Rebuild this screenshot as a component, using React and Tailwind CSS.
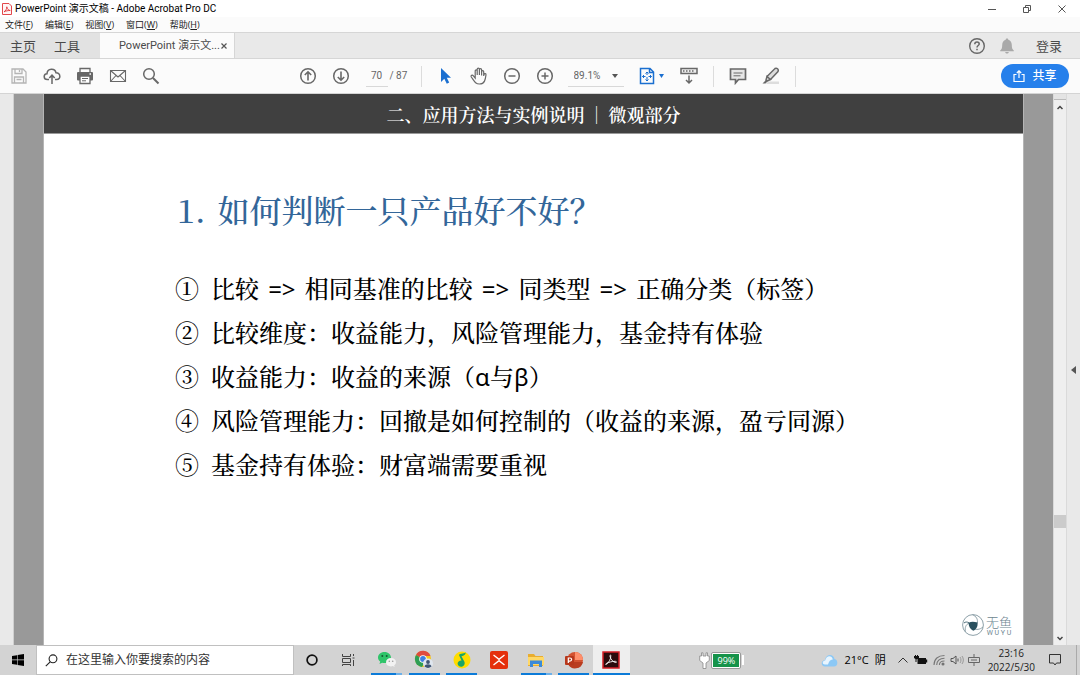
import { Fragment, useState } from 'react';
import clsx from 'clsx';

const menus = [
  { label: '文件', key: 'F' },
  { label: '编辑', key: 'E' },
  { label: '视图', key: 'V' },
  { label: '窗口', key: 'W' },
  { label: '帮助', key: 'H' },
];

const points = [
  { n: '①', text: '比较 => 相同基准的比较 => 同类型 => 正确分类（标签）' },
  { n: '②', text: '比较维度：收益能力，风险管理能力，基金持有体验' },
  { n: '③', text: '收益能力：收益的来源（α与β）' },
  { n: '④', text: '风险管理能力：回撤是如何控制的（收益的来源，盈亏同源）' },
  { n: '⑤', text: '基金持有体验：财富端需要重视' },
];

const apps = [
  { name: '微信', Icon: WeChatIcon, more: true },
  { name: 'Chrome', Icon: ChromeIcon, open: true },
  { name: 'QQ音乐', Icon: MusicIcon, open: true },
  { name: 'XMind', Icon: XIcon },
  { name: '文件资源管理器', Icon: FolderIcon, more: true },
  { name: 'PowerPoint', Icon: PowerPointIcon, open: true },
  { name: 'Acrobat', Icon: AcrobatIcon, open: true, active: true },
];

function WeChatIcon() {
  return (
    <svg width="20" height="18" viewBox="0 0 20 18">
      <path d="M7.500 1C3.500 1 1 3.600 1 6.500c0 1.700.8 3 2.200 4L2.500 13l2.700-1.300c.7.2 1.500.3 2.300.3 3.800 0 6.500-2.500 6.500-5.500S11.300 1 7.500 1z" fill="#2fc46a" />
      <circle cx="5.300" cy="5" r="1" fill="#145c33" />
      <circle cx="9.700" cy="5" r="1" fill="#145c33" />
      <path d="M14 7c-3 0-5 1.900-5 4.200s2 4.200 5 4.200c.6 0 1.200-.1 1.700-.3l2 1-.5-1.800c1.100-.8 1.800-1.900 1.800-3.100C19 8.900 17 7 14 7z" fill="#f2f2f2" />
      <circle cx="12.300" cy="10.300" r=".8" fill="#999" />
      <circle cx="15.700" cy="10.300" r=".8" fill="#999" />
    </svg>
  );
}

function ChromeIcon() {
  return (
    <svg width="20" height="20" viewBox="0 0 20 20">
      <circle cx="9" cy="9" r="8" fill="#f5c518" />
      <path d="M9 9L2 5a8 8 0 0 1 14.500 1H9z" fill="#df4b3e" />
      <path d="M9 9L2 5a8 8 0 0 0 6 12l3-5z" fill="#2f9e55" />
      <circle cx="9" cy="9" r="3.800" fill="#fff" />
      <circle cx="9" cy="9" r="2.900" fill="#3f7fe0" />
      <circle cx="14" cy="13.500" r="5" fill="#dfe6ee" />
      <circle cx="14" cy="12" r="1.900" fill="#405574" />
      <path d="M10.500 16.500c.5-3 6.500-3 7 0a5 5 0 0 1-7 0z" fill="#405574" />
    </svg>
  );
}

function MusicIcon() {
  return (
    <svg width="18" height="18" viewBox="0 0 18 18">
      <circle cx="9" cy="9" r="8.500" fill="#ffdc00" />
      <path d="M12.800 1.600c-.3 2.300-1.800 3.200-4.300 3.600l2.800 5.300c1.200 2.700-.6 5.300-3.200 5.300-2 0-3.500-1.300-3.500-3.200 0-2 1.700-3.300 3.900-3.200L6.200 4.600c-.3-1.300.6-1.700 2-1.800 2-.1 3.300-.4 4.600-1.200z" fill="#19a566" />
    </svg>
  );
}

function XIcon() {
  return (
    <svg width="18" height="18" viewBox="0 0 18 18">
      <rect width="18" height="18" rx="2" fill="#e5300c" />
      <path d="M3.500 4L9 8.300 14.500 4M3.500 14L9 9.700l5.500 4.300" stroke="#fff" strokeWidth="1.300" fill="none" />
    </svg>
  );
}

function FolderIcon() {
  return (
    <svg width="18" height="16" viewBox="0 0 18 16">
      <path d="M1 2h6l1.500 2H16v10H1z" fill="#e9ad2f" />
      <path d="M1 5h16v8H1z" fill="#ffd866" />
      <path d="M3 8.500h12V15h-3v-3H6v3H3z" fill="#3b8ad8" />
    </svg>
  );
}

function PowerPointIcon() {
  return (
    <svg width="20" height="18" viewBox="0 0 20 18">
      <circle cx="11" cy="9" r="8" fill="#d35230" />
      <path d="M11 1a8 8 0 0 1 8 8h-8z" fill="#ff8f6b" />
      <path d="M4 11h15a8 8 0 0 1-15 2z" fill="#b93c1f" />
      <rect x="1" y="5" width="9" height="9" rx="1" fill="#b7371b" />
      <path d="M4.300 12V7h1.600c2.300 0 2.300 3.100 0 3.100H4.300" stroke="#fff" strokeWidth="1.200" fill="none" />
    </svg>
  );
}

function AcrobatIcon() {
  return (
    <svg width="18" height="18" viewBox="0 0 18 18">
      <rect x="1" y="1" width="16" height="16" fill="#2b0a0c" stroke="#d61e26" strokeWidth="1.500" />
      <path d="M4 13.500c2.500-1.500 5.200-5.500 4.800-9C8.600 3.700 7.600 4 8 5.500c.7 3 3.200 5.700 5.600 6 1.400.1 1.200-1.200-.6-1.200-3 0-6.400 1-8.600 2.200-.8.5-.9 1-.4 1z" stroke="#fff" strokeWidth=".9" fill="none" />
    </svg>
  );
}

function PdfIcon() {
  return (
    <svg width="10" height="12" viewBox="0 0 10 12" fill="none">
      <path d="M.5.500h6.500l2.500 2.500v8.500h-9z" fill="#fff5f5" stroke="#e2474b" />
      <path d="M2 8.800c1.500-.8 3-3 2.800-5 .3 2.200 1.700 3.600 3.400 3.700-2-.1-4.200.4-6.200 1.300z" stroke="#dc2f34" strokeWidth=".9" />
    </svg>
  );
}

function LogoMark() {
  return (
    <svg width="22" height="24" viewBox="0 0 22 24" fill="none" stroke="#8ea1a9" strokeWidth="1">
      <circle cx="11" cy="12" r="10.400" />
      <path d="M10.500 1.800c4 1.500 5.500 4.500 4.800 8.500M21 14c-3.300 2.700-6.500 3-9.800 1.500M3.500 18.800C2.500 14.500 4 11.500 7 10" />
      <path d="M6.500 9.800c3-1.500 5.500-1.200 9-.3.500 3.700-1 7-4.300 8.300-3.200-1.800-4.500-4.500-4.700-8z" fill="#29505e" stroke="none" />
      <path d="M2 10c1.500-1.300 3-1.200 5-.2" stroke="#4d6c78" />
    </svg>
  );
}

function Line({ children, size = 18 }) {
  return (
    <svg width={size} height={size} viewBox="0 0 18 18" fill="none" stroke="currentColor" strokeWidth="1.300">
      {children}
    </svg>
  );
}

function Tool({ label, children, className = 'text-[#686868]' }) {
  return (
    <button aria-label={label} className={clsx('flex h-8 w-[33px] shrink-0 items-center justify-center', className)}>
      {children}
    </button>
  );
}

function Separator({ className }) {
  return <div className={clsx('h-[21px] w-px shrink-0 bg-[#dcdcdc]', className)} />;
}

function TitleBar() {
  return (
    <div className="flex h-[17px] items-center bg-white pl-0.5 text-black">
      <PdfIcon />
      <h1 className="ml-[3px] font-[Roboto,'Noto_Sans_CJK_SC',sans-serif] text-[10px]/4 whitespace-nowrap">PowerPoint 演示文稿 - Adobe Acrobat Pro DC</h1>
      <div className="ml-auto flex text-[#555]">
        <button aria-label="最小化" className="flex w-[35px] justify-center">
          <svg width="10" height="10" stroke="currentColor"><path d="M1 5.500h8" /></svg>
        </button>
        <button aria-label="还原" className="flex w-[35px] justify-center">
          <svg width="10" height="10" fill="none" stroke="currentColor"><path d="M1.500 3.500h5v5h-5zM3.500 3V1.500h5v5H7" /></svg>
        </button>
        <button aria-label="关闭" className="flex w-9 justify-center">
          <svg width="10" height="10" fill="none" stroke="currentColor"><path d="M1.500 1.500l7 7M8.500 1.500l-7 7" /></svg>
        </button>
      </div>
    </div>
  );
}

function MenuBar() {
  return (
    <nav className="flex h-[15px] items-center gap-3 bg-[#fbfbfb] pl-[5px] text-[9px]/3 text-[#222]">
      {menus.map((m) => (
        <button key={m.key} className="whitespace-nowrap">
          {m.label}(<u>{m.key}</u>)
        </button>
      ))}
    </nav>
  );
}

function TabBar() {
  return (
    <div className="flex h-[27px] items-stretch border-y border-[#d6d6d6] bg-[#e9e9e9] text-[13px]/5 text-[#4a4a4a]">
      <div className="flex w-[100px] gap-[18px] bg-[#e2e2e2] pl-2.5">
        <button>主页</button>
        <button>工具</button>
      </div>
      <div className="flex w-[135px] items-center border-r border-[#d6d6d6] bg-[#fbfbfb] pl-[19px]">
        <button className="font-[Roboto,'Noto_Sans_CJK_SC',sans-serif] text-[11px] whitespace-nowrap">PowerPoint 演示文...</button>
        <button aria-label="关闭标签" className="ml-auto pr-[7px]">
          <svg width="6" height="6" stroke="#555" strokeWidth="1.200"><path d="M.5.500l5 5M5.500.500l-5 5" /></svg>
        </button>
      </div>
      <div className="ml-auto flex items-center pr-[18px]">
        <button aria-label="帮助" className="text-[#666]">
          <Line>
            <circle cx="9" cy="9" r="7.300" strokeWidth="1.400" />
            <path d="M6.800 7.200c0-3 4.400-2.800 4.400-.2 0 1.600-2.200 1.500-2.200 3.500M9 11.800v1.500" strokeWidth="1.500" />
          </Line>
        </button>
        <button aria-label="通知" className="ml-[14px]">
          <svg width="14" height="16" viewBox="0 0 14 16" fill="#a9a9a9">
            <path d="M7 .5c.8 0 1.300.6 1.300 1.200C10.700 2.400 11.800 4.300 11.800 7c0 3 .5 4.300 2 5.500v.8H.2v-.8C1.700 11.300 2.200 10 2.200 7c0-2.700 1.100-4.600 3.500-5.300C5.700 1.100 6.200.5 7 .5zM5.200 14h3.600c-.3 2-3.300 2-3.600 0z" />
          </svg>
        </button>
        <button className="ml-[22px]">登录</button>
      </div>
    </div>
  );
}

function Toolbar() {
  const [page, setPage] = useState('70');

  return (
    <div className="flex h-[35px] items-center border-b border-[#d4d4d4] bg-[#fbfbfb]">
      <div className="flex flex-1 pl-0.5">
        <Tool label="保存" className="text-[#b5b5b5]">
          <Line><path d="M2 2h11l3 3v11H2zM5 2v4.500h7V2M9.500 3v2M4.500 16v-6h9v6M6.500 12.500h5" /></Line>
        </Tool>
        <Tool label="上传">
          <Line>
            <path d="M6 12.500H4.300C.2 12.500.2 7 4 6.800 4.300 1 12 .8 13 5.800c5 .3 5 6.700.7 6.700H12M9 17V8.500M6.300 11L9 8.200l2.700 2.800" strokeWidth="1.500" />
          </Line>
        </Tool>
        <Tool label="打印">
          <Line>
            <path d="M4 5V1.500h10V5" fill="#fff" />
            <rect x="1" y="5" width="16" height="8.500" rx="1" fill="currentColor" stroke="none" />
            <path d="M4 9h10v7.500H4z" fill="#fff" />
            <path d="M6 11.500h6M6 13.800h4" strokeWidth="1" />
            <path d="M13.500 7h1.500" stroke="#fff" />
          </Line>
        </Tool>
        <Tool label="邮件">
          <Line><path d="M1.500 3.500h15v11h-15zM1.500 3.500L9 10l7.500-6.500M1.500 14.500L7 8.500M16.500 14.500L11 8.500" strokeWidth="1.100" /></Line>
        </Tool>
        <Tool label="查找">
          <Line><circle cx="7" cy="7" r="5.300" strokeWidth="1.500" /><path d="M11 11l5.500 5.500" strokeWidth="2" /></Line>
        </Tool>
      </div>

      <div className="flex items-center pl-4 text-[10px]/4 text-[#666]">
        <Tool label="上一页">
          <Line><circle cx="9" cy="9" r="7.300" strokeWidth="1.500" /><path d="M9 13.500V5M5.800 8L9 4.800 12.200 8" strokeWidth="1.600" /></Line>
        </Tool>
        <Tool label="下一页">
          <Line><circle cx="9" cy="9" r="7.300" strokeWidth="1.500" /><path d="M9 4.500V13M5.800 10L9 13.200l3.200-3.200" strokeWidth="1.600" /></Line>
        </Tool>
        <input
          aria-label="页码"
          value={page}
          onChange={(e) => setPage(e.target.value)}
          className="ml-2 h-[21px] w-[22px] border-b border-[#d8d8d8] text-center font-[Roboto] text-[10px] outline-none"
        />
        <span className="ml-0.5 w-[17px] font-[Roboto] whitespace-nowrap">/ 87</span>
        <Separator className="ml-[14px]" />
        <Tool label="选择" className="ml-2">
          <svg width="12" height="18" viewBox="0 0 12 18" fill="#1b6fd0"><path d="M1 1v14l3.300-3.200 2.500 5 2.400-1.200-2.400-4.800H11z" /></svg>
        </Tool>
        <Tool label="手形">
          <Line>
            <path d="M5.200 11V4c0-1.600 2-1.600 2 0v4V2.300c0-1.600 2.200-1.600 2.200 0V8 2.800c0-1.600 2.200-1.600 2.200 0V8.500 4.800c0-1.600 2.100-1.600 2.100 0V9l.3-1.500c.4-1.500 2.200-1.100 2 .3-.6 4.500-1.200 9.200-6.500 9.200-4 0-5-2.500-8.200-7-.9-1.500 1-2.500 2.100-1.200z" strokeWidth="1.200" />
          </Line>
        </Tool>
        <Tool label="缩小">
          <Line><circle cx="9" cy="9" r="7.300" strokeWidth="1.500" /><path d="M5.500 9h7" strokeWidth="1.500" /></Line>
        </Tool>
        <Tool label="放大">
          <Line><circle cx="9" cy="9" r="7.300" strokeWidth="1.500" /><path d="M5.500 9h7M9 5.500v7" strokeWidth="1.500" /></Line>
        </Tool>
        <div className="relative ml-1.5 flex w-14 items-center border-b border-[#d8d8d8]">
          <select aria-label="缩放比例" className="h-5 w-full appearance-none pl-1.5 font-[Roboto] text-[10px] outline-none">
            <option>89.1%</option>
            <option>100%</option>
            <option>125%</option>
          </select>
          <svg width="6" height="4" className="pointer-events-none absolute right-1.5" fill="#555"><path d="M0 0h6L3 4z" /></svg>
        </div>
        <button aria-label="适合页面" className="ml-[14px] flex w-7 items-center justify-center gap-1 text-[#1b6fd0]">
          <svg width="16" height="18" viewBox="0 0 16 18" fill="none" stroke="currentColor" strokeWidth="1.500">
            <path d="M1.500 1.500h9.500l3.500 3.500v11.500h-13zM10.500 1.500v4h4" />
            <path d="M8 5v3M8 10v4M3.500 9.500h3M9.500 9.500h3M6.500 6.500L8 5l1.500 1.500M6.500 12.500L8 14l1.500-1.500M5 8L3.500 9.500 5 11M11 8l1.500 1.500L11 11" strokeWidth="1" />
          </svg>
          <svg width="5" height="4" fill="currentColor"><path d="M0 0h5L2.500 4z" /></svg>
        </button>
        <Tool label="滚动模式" className="ml-[7px] text-[#686868]">
          <Line>
            <path d="M1 1.500h16v5H1z" fill="#eee" strokeWidth="1.500" />
            <path d="M3 4h12" strokeDasharray="1.500 1.500" />
            <path d="M9 8.500v7.500M6 13l3 3 3-3" strokeWidth="1.500" />
          </Line>
        </Tool>
        <Separator className="ml-[7px]" />
        <Tool label="注释" className="ml-2 text-[#686868]">
          <Line><path d="M1.500 2h15v10.500H9.500L6.500 16v-3.500h-5z" fill="#e6e6e6" strokeWidth="1.700" /><path d="M4.500 6h9M4.500 8.800h7" strokeWidth="1" /></Line>
        </Tool>
        <Tool label="荧光笔">
          <Line>
            <path d="M6 14.500h11V17H4z" fill="#ddd" stroke="none" />
            <path d="M5 9.500L13 1.500c1.800-1 4 .8 3 3L8.500 12.500zM5 9.500l-1 3.500 1 1 3.500-1.500z" fill="#ddd" strokeWidth="1.500" />
            <path d="M4 13l1.500 1.500L3.500 16.500H.5z" fill="currentColor" stroke="none" />
          </Line>
        </Tool>
        <Separator className="ml-[7px]" />
      </div>

      <div className="flex flex-1 justify-end pr-[11px]">
        <button className="flex h-6 w-[68px] items-center justify-center gap-[7px] rounded-full bg-[#2680eb] text-[12px]/4 font-medium text-white">
          <svg width="12" height="12" fill="none" stroke="currentColor" strokeWidth="1.200">
            <path d="M3.500 4.500h-2.500v7h10v-7H8.500M6 8V1M3.800 3L6 .8 8.200 3" />
          </svg>
          共享
        </button>
      </div>
    </div>
  );
}

// arrows and Greek letters are set in a sans face inside the serif text
function PointText({ text }) {
  return text.split(/(=>|α|β)/).map((part, i) => {
    if (part === '=>') return <span key={i} className="mx-[3px] font-['Noto_Sans'] leading-none font-normal">{part}</span>;
    if (part === 'α' || part === 'β') return <span key={i} className="font-['Noto_Sans'] leading-none font-normal">{part}</span>;
    return <Fragment key={i}>{part}</Fragment>;
  });
}

function Slide() {
  return (
    <article className="flex flex-1 flex-col border-x border-[#b5b5b5] bg-white font-['Noto_Serif_CJK_SC','Noto_Serif_SC','Source_Han_Serif_SC','Noto_Sans_CJK_SC',serif] text-black">
      <header className="h-10 border-b border-[#999] bg-[#404040] pt-2 text-center text-[18px]/6 font-semibold text-white">
        二、应用方法与实例说明<span className="mx-[3px]">｜</span>微观部分
      </header>
      <div className="pt-[51px] pl-[131px]">
        <h2 className="flex gap-3 pl-0.5 text-[32px]/[48px] font-medium text-[#336699]">
          <span>1.</span>
          <span>如何判断一只产品好不好？</span>
        </h2>
        <ol className="mt-[33px] font-medium">
          {points.map((p) => (
            <li key={p.n} className="flex gap-3 text-[24px]/[44px] whitespace-nowrap">
              <span>{p.n}</span>
              <span><PointText text={p.text} /></span>
            </li>
          ))}
        </ol>
      </div>
      <footer className="mt-auto flex items-center justify-end gap-0.5 pr-[11px] pb-2 text-[#6d858f]">
        <LogoMark />
        <div className="font-['Noto_Sans_CJK_SC',sans-serif]">
          <p className="text-[13px]/[16px] font-light">无鱼</p>
          <p className="text-center font-[Roboto] text-[7px]/[6px] whitespace-pre">W U Y U</p>
        </div>
      </footer>
    </article>
  );
}

function Viewer() {
  return (
    <main className="flex min-h-0 flex-1 bg-[#999]">
      <div className="w-[14px] border-r border-[#d0d0d0] bg-[#e9e9e9]" />
      <div className="flex flex-1 px-[29px]">
        <Slide />
      </div>
      <div className="flex w-[14px] flex-col items-center border-x border-[#dadada] bg-[#efefef] text-[#444]">
        <div className="h-1.5 w-full border-b border-[#bbb] bg-[#e4e4e4]" />
        <svg width="6" height="5" className="mt-[5px]" fill="none" stroke="currentColor" strokeWidth="1.500"><path d="M.5 4L3 1.500 5.500 4" /></svg>
        <div className="flex-[406]" />
        <div className="h-[13px] w-full bg-[#cbcbcb]" />
        <div className="flex-[108]" />
        <svg width="6" height="5" className="mb-1" fill="none" stroke="currentColor" strokeWidth="1.500"><path d="M.5 1L3 3.500 5.500 1" /></svg>
      </div>
      <button aria-label="展开面板" className="flex w-[13px] items-center justify-center bg-[#e9e9e9]">
        <svg width="5" height="8" fill="#555"><path d="M5 0v8L0 4z" /></svg>
      </button>
    </main>
  );
}

function Taskbar() {
  return (
    <footer className="flex h-[30px] items-stretch bg-[#d3d3d3] text-black">
      <button aria-label="开始" className="flex w-9 items-center justify-center">
        <svg width="12" height="12"><path d="M0 2l5-.8v4.300H0zM5.600 1.100L12 0v5.500H5.600zM0 6.200h5v4.500l-5-.7zM5.600 6.200H12V12l-6.400-1.100z" /></svg>
      </button>
      <label className="flex w-[258px] items-center gap-2 border border-[#c0c0c0] bg-white pl-2">
        <svg width="13" height="13" fill="none" stroke="#222" strokeWidth="1.100"><circle cx="8" cy="4.800" r="3.900" /><path d="M5.200 7.800L.8 12.200" /></svg>
        <input aria-label="搜索" placeholder="在这里输入你要搜索的内容" className="min-w-0 flex-1 text-[12px] outline-none placeholder:text-[#333]" />
      </label>
      <button aria-label="Cortana" className="flex w-9 items-center justify-center">
        <svg width="12" height="12" fill="none" stroke="#111" strokeWidth="1.700"><circle cx="6" cy="6" r="4.900" /></svg>
      </button>
      <button aria-label="任务视图" className="flex w-9 items-center justify-center">
        <svg width="14" height="12" fill="none" stroke="#444"><path d="M1.500 0v2.500h8V0M1.500 4.500h8v4h-8zM1.500 12v-1.500h8V12M12.500 0v2M12.500 6v6M11.500 4h2" /></svg>
      </button>
      <div className="ml-0.5 flex w-[262px]">
        {apps.map(({ name, Icon, open, more, active }) => (
          <button key={name} aria-label={name} className={clsx('flex flex-1 flex-col items-center', active && 'bg-[#eee]')}>
            <span className="flex flex-1 items-center pt-0.5"><Icon /></span>
            <span className={clsx('flex h-0.5', active ? 'w-full' : 'w-[31px]')}>
              {(open || more) && <span className="flex-1 bg-[#0c7bd8]" />}
              {more && <span className="w-1.5 bg-[#6db0e8]" />}
            </span>
          </button>
        ))}
      </div>

      <div className="ml-auto flex items-center">
        <div className="mr-[77px] flex items-center gap-px">
          <svg width="11" height="17" viewBox="0 0 11 17" fill="#fff" stroke="#888" strokeWidth=".8"><path d="M2.500 4V.8h1.500V4h3V.8h1.500V4h1.800v4.500L7 11v5.500H4V11L.7 8.500V4z" /></svg>
          <div className="h-[17px] w-[30px] rounded-xs border border-[#999] bg-white p-px">
            <div className="bg-[#16934a] text-center text-[9px]/[13px] text-white">99%</div>
          </div>
          <div className="h-2.5 w-0.5 bg-white" />
        </div>
        <button className="flex items-center gap-1.5 text-[11px]/4 whitespace-nowrap">
          <svg width="17" height="13" viewBox="0 0 17 13">
            <path d="M4 12.500C-.5 12.500-.3 6.500 4 6 5-.5 12.500-.5 13.500 5c4 .5 3.700 7.500-.5 7.500z" fill="#8cc8f5" />
            <path d="M4 10.500c-3 0-3-3.500.2-4C5.300 1 11 1 11.800 5.500 8 6 8 8.500 7 10.500z" fill="#e8f5ff" />
          </svg>
          <span>21°C</span>
          <span>阴</span>
        </button>
        <div className="ml-3 flex items-center gap-1 text-[#333]">
          <button aria-label="显示隐藏的图标" className="mr-0.5">
            <svg width="10" height="8" fill="none" stroke="currentColor"><path d="M.5 6.500L5 2l4.500 4.500" /></svg>
          </button>
          <svg width="14" height="10" viewBox="0 0 14 10" fill="#111"><path d="M3.500 3H12v1.500h1.200v3H12V9H3.500zM0 1h1V0h1v1h1V0h1v1h1v2H4L2.500 4.500V7h-1V4L0 3z" /></svg>
          <svg width="14" height="12" viewBox="0 0 14 12" fill="none" stroke="#777" strokeWidth="1.100"><path d="M2 11C2 5 6 1.500 12.500 1.500M4.700 11C4.700 7 7.500 4.300 12.500 4.300M7.400 11c0-2.500 2-4 5.100-4" /><circle cx="11" cy="10" r="1" fill="#333" /></svg>
          <svg width="14" height="12" viewBox="0 0 14 12" fill="none" stroke="#555"><path d="M1 4.500h2L6 2v8L3 7.500H1zM8 4.500v3" /><path d="M10 3c1.300 1.500 1.300 4.500 0 6M12 2c1.800 2.300 1.800 5.700 0 8" stroke="#999" /></svg>
          <svg width="12" height="12" viewBox="0 0 12 12" fill="none" stroke="#666"><path d="M.5 3.500h11v5H.5zM6 0v3M6 9v3M3 6h6" /></svg>
        </div>
        <time className="ml-2 text-center text-[10px]/[14px] whitespace-nowrap text-[#222]">
          23:16<br />2022/5/30
        </time>
        <button aria-label="通知中心" className="mr-[15px] ml-[14px]">
          <svg width="12" height="12" fill="none" stroke="#333"><path d="M.5.500h11v8.500h-4L6 11 4.500 9h-4z" /></svg>
        </button>
        <div className="mr-[3px] h-[30px] w-px bg-[#aaa]" />
      </div>
    </footer>
  );
}

export default function App() {
  return (
    <div className="flex h-screen flex-col overflow-hidden bg-white font-['Open_Sans','Noto_Sans_CJK_SC',sans-serif]">
      <TitleBar />
      <MenuBar />
      <TabBar />
      <Toolbar />
      <Viewer />
      <Taskbar />
    </div>
  );
}
